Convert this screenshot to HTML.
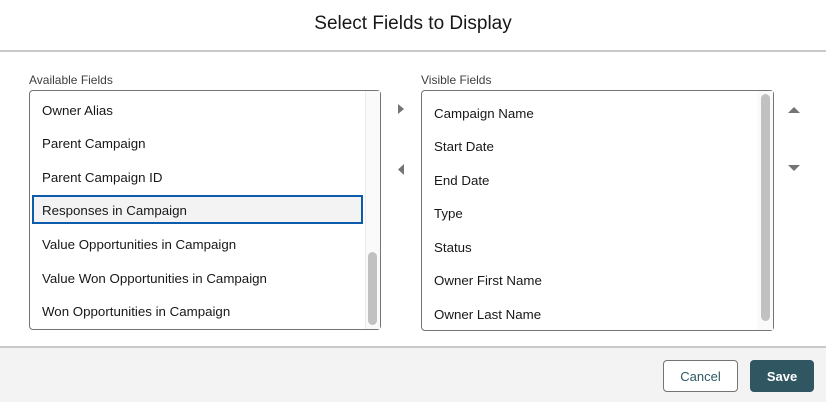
<!DOCTYPE html>
<html><head><style>
*{margin:0;padding:0;box-sizing:border-box}
body{width:826px;height:402px;background:#fff;font-family:"Liberation Sans",sans-serif;color:#181818;position:relative;overflow:hidden}
.title{position:absolute;top:2px;left:0;width:826px;height:48px;line-height:44px;text-align:center;font-size:19px;color:#181818}
.hr{position:absolute;top:50px;left:0;width:826px;height:2px;background:#c9c9c9}
.lbl{position:absolute;font-size:12px;color:#3e3e3c;top:73px}
.box{position:absolute;border:1px solid #747474;border-radius:4px;background:#fff}
.item{position:absolute;font-size:13.3px;line-height:16px;white-space:nowrap}
.track{position:absolute;background:#fafafa;border-left:1px solid #ececec}
.thumb{position:absolute;background:#c1c1c1;border-radius:5px}
.sel{position:absolute;left:32px;top:195px;width:331px;height:29px;background:#f3f3f3;border:2px solid #0b5cab}
.foot{position:absolute;top:346px;left:0;width:826px;height:56px;background:#f3f3f3;border-top:2px solid #c9c9c9}
.btn{position:absolute;top:360px;height:32px;border-radius:4px;font-size:13px;text-align:center;line-height:31px}
</style></head><body>
<div class="title">Select Fields to Display</div>
<div class="hr"></div>
<div class="lbl" style="left:29px">Available Fields</div>
<div class="lbl" style="left:421px">Visible Fields</div>

<div class="box" style="left:29px;top:90px;width:352px;height:240px"></div>
<div class="track" style="left:365px;top:91px;width:15px;height:238px"></div>
<div class="thumb" style="left:368px;top:252px;width:9px;height:73px"></div>
<div class="sel"></div>
<div class="item" style="left:42px;top:103px">Owner Alias</div>
<div class="item" style="left:42px;top:136px">Parent Campaign</div>
<div class="item" style="left:42px;top:170px">Parent Campaign ID</div>
<div class="item" style="left:42px;top:203px">Responses in Campaign</div>
<div class="item" style="left:42px;top:237px">Value Opportunities in Campaign</div>
<div class="item" style="left:42px;top:271px">Value Won Opportunities in Campaign</div>
<div class="item" style="left:42px;top:304px">Won Opportunities in Campaign</div>

<svg style="position:absolute;left:396px;top:102px" width="12" height="80"><path d="M2 2 L8 7 L2 12Z" fill="#747474"/><path d="M8 62 L2 67.5 L8 73Z" fill="#747474"/></svg>

<div class="box" style="left:421px;top:90px;width:353px;height:241px"></div>
<div class="track" style="left:757px;top:91px;width:16px;height:239px;border-left:none;background:#fafafa"></div>
<div class="thumb" style="left:761px;top:94px;width:9px;height:227px"></div>
<div class="item" style="left:434px;top:106px">Campaign Name</div>
<div class="item" style="left:434px;top:139px">Start Date</div>
<div class="item" style="left:434px;top:173px">End Date</div>
<div class="item" style="left:434px;top:206px">Type</div>
<div class="item" style="left:434px;top:240px">Status</div>
<div class="item" style="left:434px;top:273px">Owner First Name</div>
<div class="item" style="left:434px;top:307px">Owner Last Name</div>

<svg style="position:absolute;left:786px;top:100px" width="16" height="76"><path d="M2 13 L8 7 L14 13Z" fill="#747474"/><path d="M2 65 L8 71 L14 65Z" fill="#747474"/></svg>

<div class="foot"></div>
<div class="btn" style="left:663px;width:75px;background:#fff;border:1px solid #747474;color:#2e5a63">Cancel</div>
<div class="btn" style="left:750px;width:64px;background:#2f5661;color:#fff;font-weight:bold;border:1px solid #2f5661">Save</div>
</body></html>
